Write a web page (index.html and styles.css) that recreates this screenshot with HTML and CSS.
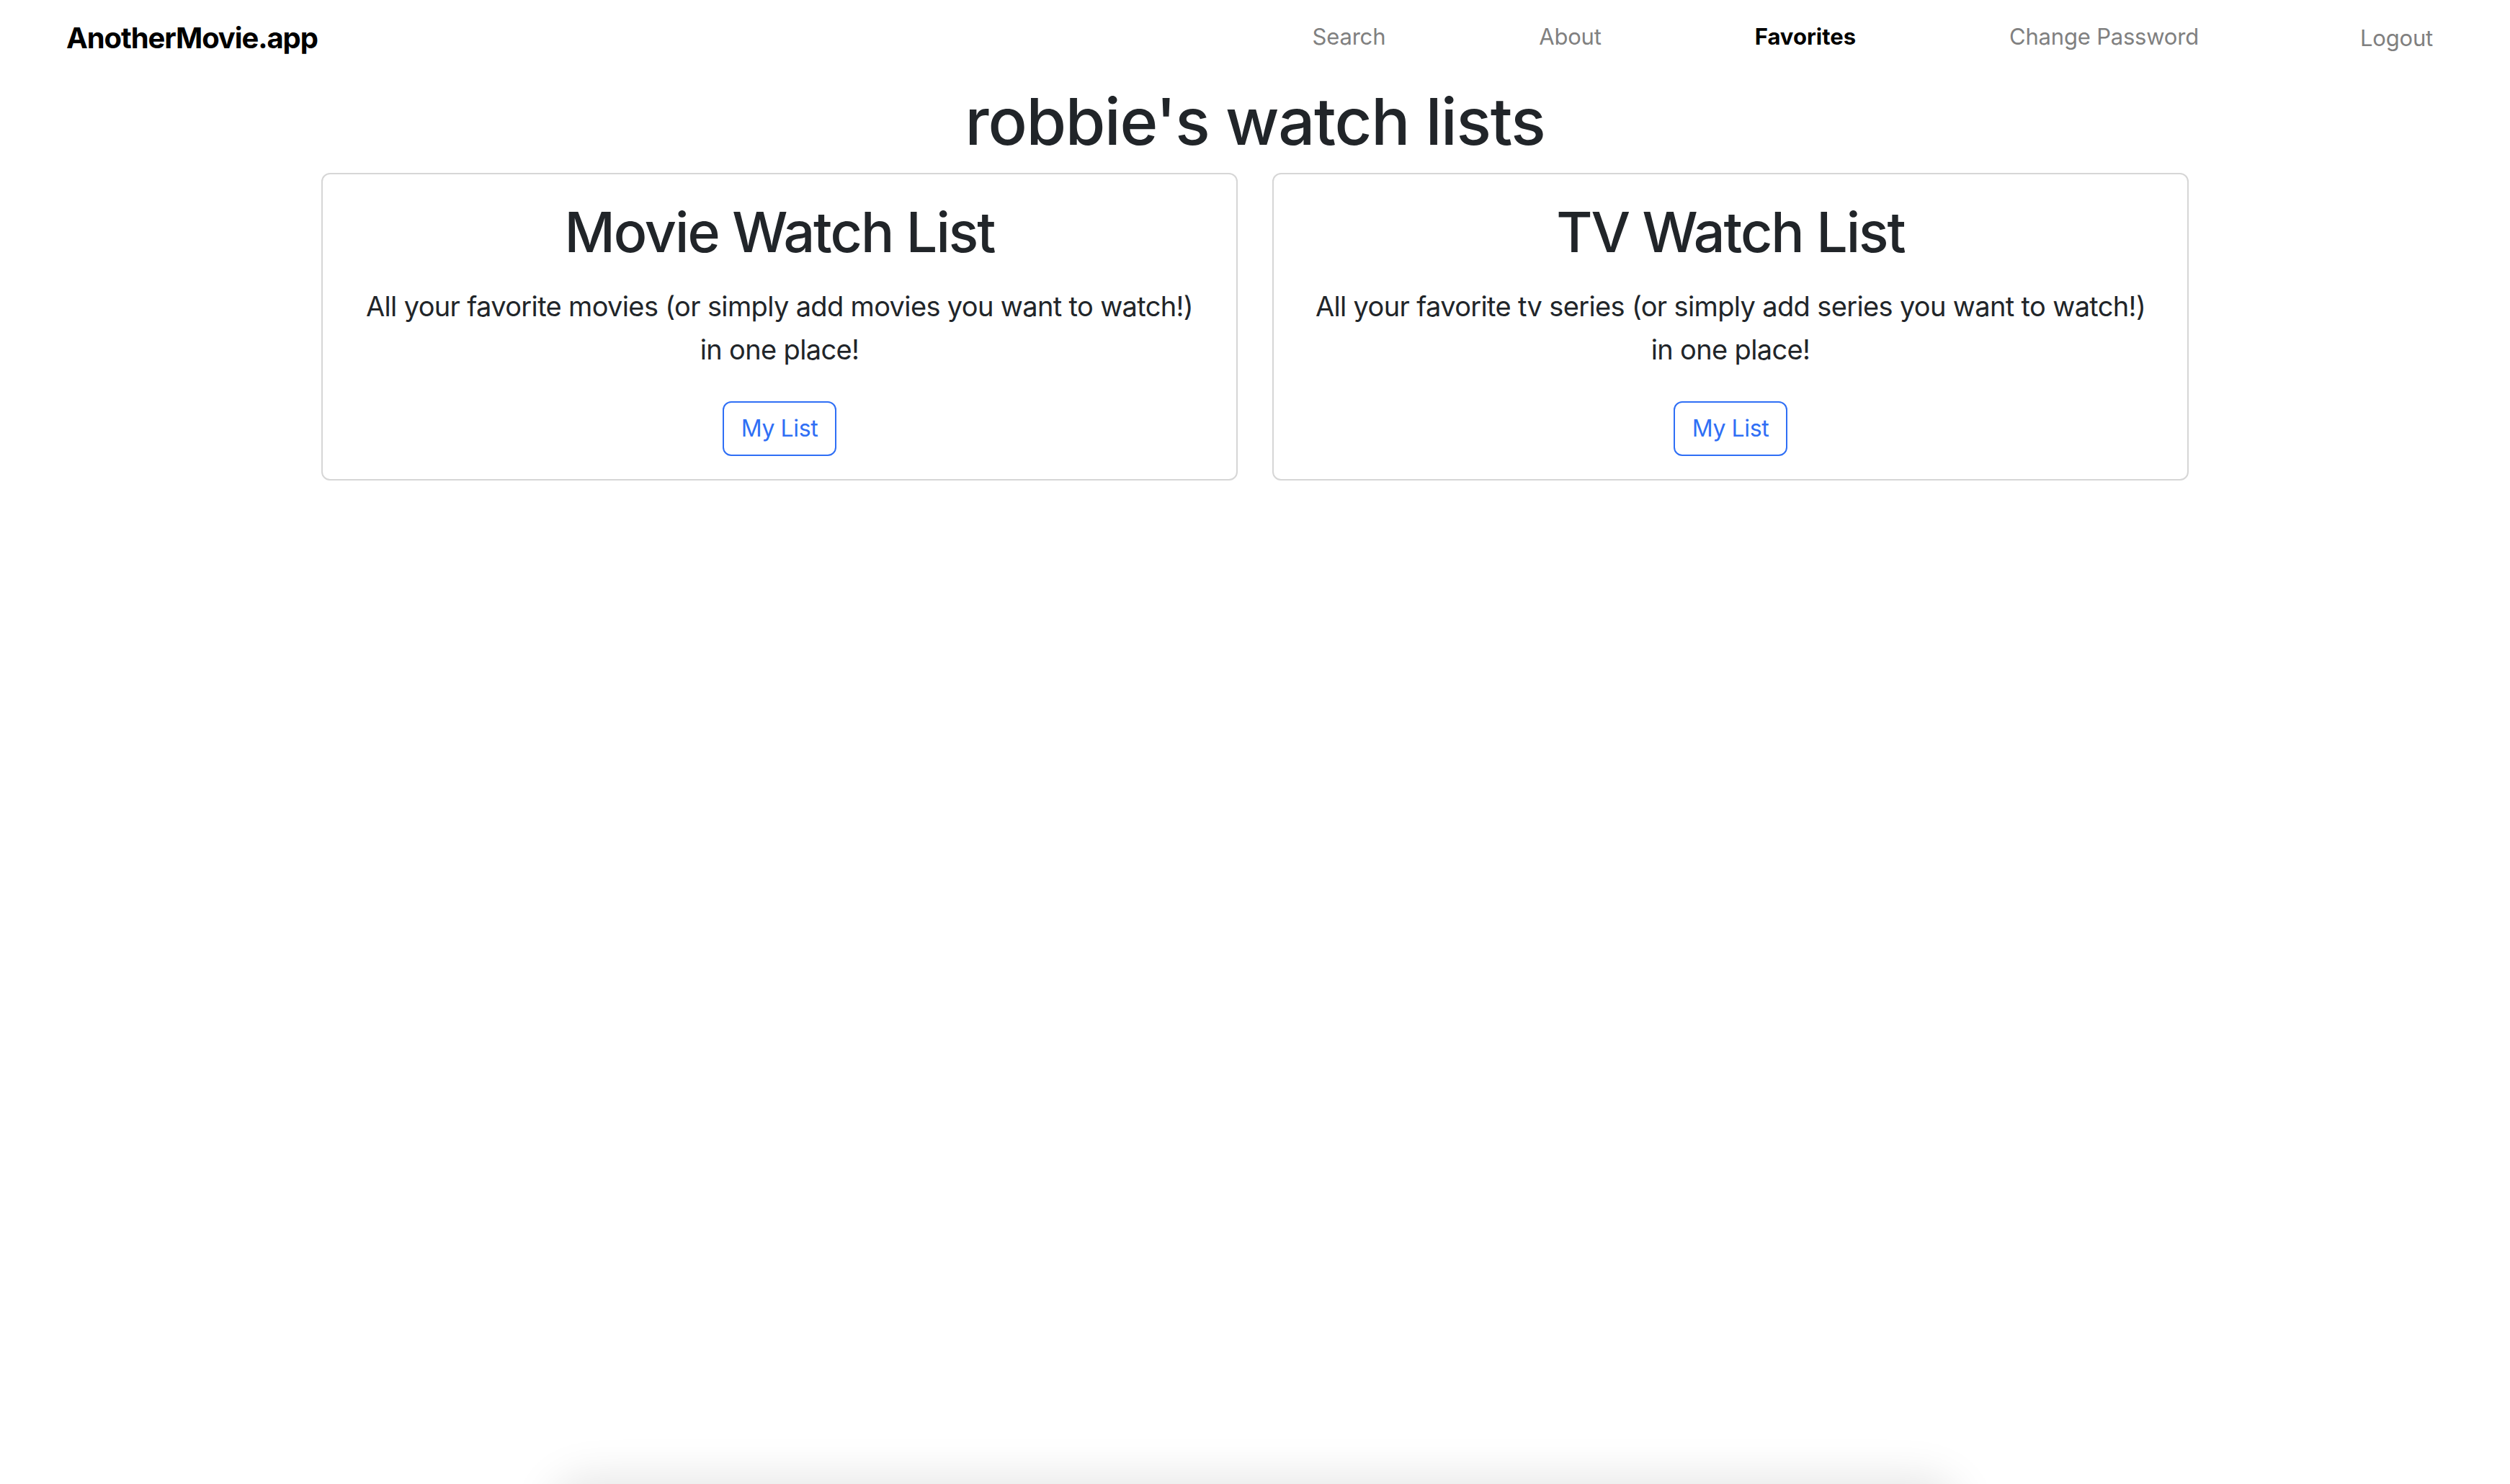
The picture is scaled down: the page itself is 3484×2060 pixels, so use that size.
FILE: index.html
```html
<!DOCTYPE html>
<html lang="en">
<head>
<meta charset="utf-8">
<title>AnotherMovie.app</title>
<link rel="stylesheet" href="styles.css">
</head>
<body>
<nav class="navbar">
  <a class="brand" href="#">AnotherMovie.app</a>
  <ul class="nav-links">
    <li><a class="nav-link" href="#">Search</a></li>
    <li><a class="nav-link" href="#">About</a></li>
    <li><a class="nav-link active" href="#">Favorites</a></li>
    <li><a class="nav-link" href="#">Change Password</a></li>
    <li class="nav-item-logout"><a class="nav-link logout" href="#">Logout</a></li>
  </ul>
</nav>
<main class="page">
  <h1 class="page-title">robbie's watch lists</h1>
  <div class="cards">
    <section class="card">
      <h2 class="card-title">Movie Watch List</h2>
      <p class="card-text">All your favorite movies (or simply add movies you want to watch!)<br>in one place!</p>
      <a class="btn" href="#">My List</a>
    </section>
    <section class="card">
      <h2 class="card-title">TV Watch List</h2>
      <p class="card-text">All your favorite tv series (or simply add series you want to watch!)<br>in one place!</p>
      <a class="btn" href="#">My List</a>
    </section>
  </div>
</main>
<div class="dock-shadow"></div>
</body>
</html>
```

FILE: styles.css
```css
* { box-sizing: border-box; }
html, body { height: 100%; }
body {
  margin: 0;
  background: #fff;
  color: #212529;
  font-family: Inter, "Noto Sans", "Liberation Sans", sans-serif;
  overflow: hidden;
}
a { text-decoration: none; }

.navbar {
  display: flex;
  align-items: center;
  height: 102px;
  padding: 0 107px 0 92px;
}
.brand {
  font-size: 40px;
  line-height: 60px;
  font-weight: 700;
  color: #000;
  letter-spacing: -1.1px;
  margin-top: 3px;
}
.nav-links {
  list-style: none;
  margin: 0 0 0 auto;
  padding: 0;
  display: flex;
  align-items: center;
  gap: 213px;
}
.nav-item-logout { margin-left: 11px; }
.nav-link {
  display: block;
  font-size: 31px;
  line-height: 48px;
  color: #808080;
  letter-spacing: -0.2px;
}
.nav-link.active {
  color: #000;
  font-weight: 700;
  letter-spacing: 0;
}
.nav-link.logout { margin-top: 4px; }

.page {
  max-width: 2640px;
  margin: 0 auto;
  padding: 0 24px;
}
.page-title {
  margin: 13px 0 17px;
  text-align: center;
  font-size: 90px;
  line-height: 108px;
  font-weight: 500;
  letter-spacing: -1.3px;
}
.cards {
  display: grid;
  grid-template-columns: 1fr 1fr;
  gap: 48px;
  align-items: start;
}
.card {
  border: 2px solid #d6d6d6;
  border-radius: 12px;
  padding: 32px;
  display: flex;
  flex-direction: column;
  align-items: center;
  text-align: center;
}
.card-title {
  margin: 0 0 25px;
  font-size: 77px;
  line-height: 96px;
  font-weight: 500;
  letter-spacing: -2px;
}
.card-text {
  margin: 0 0 42px;
  font-size: 38px;
  line-height: 60px;
  font-weight: 400;
  letter-spacing: -0.65px;
  white-space: nowrap;
}
.btn {
  display: inline-block;
  padding: 12px 24px;
  border: 2px solid #2f6ff5;
  border-radius: 12px;
  color: #2f6ff5;
  font-size: 32px;
  line-height: 48px;
  letter-spacing: -0.4px;
}

.dock-shadow {
  position: fixed;
  left: 50%;
  bottom: -90px;
  width: 1940px;
  height: 90px;
  transform: translateX(-50%);
  border-radius: 45px;
  background: #fff;
  box-shadow: 0 0 60px 10px rgba(0, 0, 0, 0.10);
}
```
